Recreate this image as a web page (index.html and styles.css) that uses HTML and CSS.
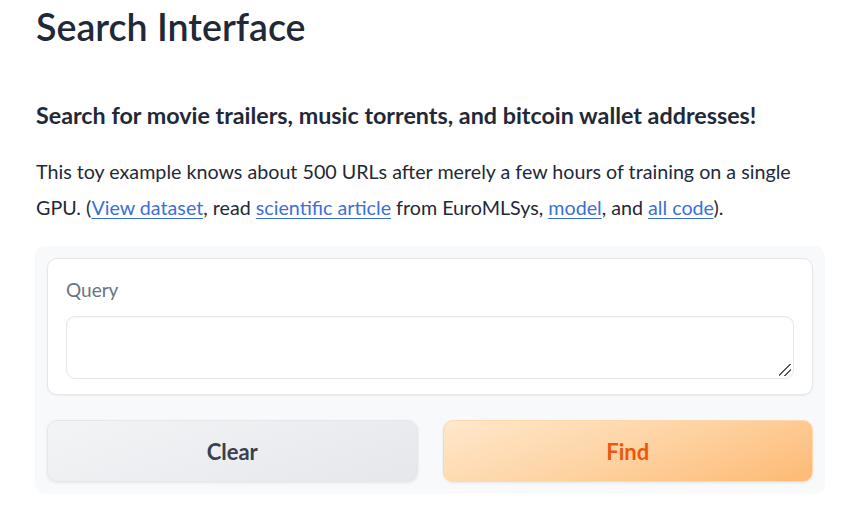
FILE: index.html
```html
<!DOCTYPE html>
<html>
<head>
<meta charset="utf-8">
<link rel="stylesheet" href="styles.css">
</head>
<body>
<main class="app">
  <h1 class="title">Search Interface</h1>
  <h3 class="subtitle">Search for movie trailers, music torrents, and bitcoin wallet addresses!</h3>
  <p class="desc">This toy example knows about 500 URLs after merely a few hours of training on a single GPU. (<a href="#">View dataset</a>, read <a href="#">scientific article</a> from EuroMLSys, <a href="#">model</a>, and <a href="#">all code</a>).</p>
  <section class="panel">
    <div class="block">
      <label class="label">Query</label>
      <div class="textarea"><span class="grip"></span></div>
    </div>
    <div class="buttons">
      <button class="btn secondary">Clear</button>
      <button class="btn primary">Find</button>
    </div>
  </section>
</main>
</body>
</html>
```
FILE: styles.css
```css
* { box-sizing: border-box; }
html, body { margin: 0; padding: 0; background: #ffffff; }
body { font-family: "Lato", "Noto Sans", sans-serif; color: #1f2937; }
.app { padding: 0 34px 0 35px; }
.title { margin: 0; padding-top: 4px; font-size: 37.6px; line-height: 46px; font-weight: 600; color: #1f2937; padding-left: 1px; }
.subtitle { margin: 49px 0 0 1px; font-size: 23.3px; line-height: 32px; font-weight: 700; color: #1f2937; }
.desc { margin: 23px 0 0 1px; max-width: 765px; font-size: 19.7px; line-height: 36px; color: #1f2937; }
.desc a { color: #3b6fd9; text-decoration: underline; text-underline-offset: 3px; }
.panel { margin-top: 20px; width: 790px; background: #f8f9fb; border-radius: 10px; padding: 12px; }
.block { background: #fff; border: 1px solid #e5e7eb; border-radius: 10px; box-shadow: 0 1px 2px rgba(0,0,0,0.06); padding: 18px 18px 15px 18px; }
.label { display: block; font-size: 19px; line-height: 26px; color: #6b7280; margin-bottom: 13px; }
.textarea { position: relative; height: 63px; border: 1px solid #e5e7eb; border-radius: 9px; box-shadow: inset 0 1px 2px rgba(0,0,0,0.04); }
.grip { position: absolute; right: 2px; bottom: 2px; width: 12px; height: 12px; background: linear-gradient(135deg, transparent 45%, #555 45%, #555 52%, transparent 52%, transparent 70%, #555 70%, #555 77%, transparent 77%); }
.buttons { display: flex; gap: 25px; margin-top: 25px; }
.btn { flex: 1; height: 62px; border-radius: 10px; font-family: inherit; font-size: 22px; font-weight: 700; cursor: pointer; box-shadow: 0 1px 3px rgba(0,0,0,0.08); }
.secondary { background: linear-gradient(160deg, #f3f4f6, #e5e7eb); border: 1px solid #e5e7eb; color: #374151; }
.primary { background: linear-gradient(160deg, #ffe8cc 0%, #fed3a3 50%, #fdba74 100%); border: 1px solid #fed7aa; color: #ea580c; }
```
